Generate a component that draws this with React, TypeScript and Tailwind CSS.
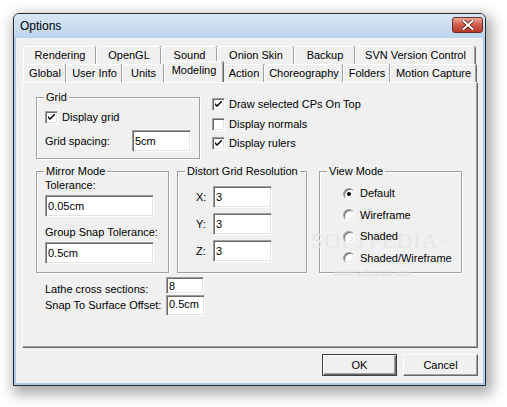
import React from "react";

const FONT = { fontFamily: '"Liberation Sans", Arial, sans-serif' };

function Sunken({ className, value }: { className: string; value: string }) {
  return (
    <div
      className={
        "relative z-10 flex items-center bg-white pl-[2px] border border-t-[#a0a0a0] border-l-[#a0a0a0] border-r-white border-b-white shadow-[inset_1px_1px_0_#696969,inset_-1px_-1px_0_#e3e3e3] text-black " +
        className
      }
    >
      {value}
    </div>
  );
}

function Check({ checked, label }: { checked: boolean; label: string }) {
  return (
    <div className="flex items-center h-[13px]">
      <div className="w-[13px] h-[13px] bg-white border border-t-[#a0a0a0] border-l-[#a0a0a0] border-r-white border-b-white shadow-[inset_1px_1px_0_#696969,inset_-1px_-1px_0_#e3e3e3] flex items-center justify-center">
        {checked && (
          <svg width="7" height="7" viewBox="0 0 7 7">
            <path d="M0 2 L0 4 L2 6 L7 1 L7 -1 L2 4 Z" fill="#000" />
          </svg>
        )}
      </div>
      <span className="ml-[4px] leading-[13px]">{label}</span>
    </div>
  );
}

function Radio({ checked, label }: { checked: boolean; label: string }) {
  return (
    <div className="relative z-10 flex items-center h-[13px]">
      <div className="w-[12px] h-[12px] rounded-full bg-white border border-t-[#a0a0a0] border-l-[#a0a0a0] border-r-white border-b-white shadow-[inset_1px_1px_0_#696969,inset_-1px_-1px_0_#e3e3e3] flex items-center justify-center">
        {checked && <div className="w-[4px] h-[4px] rounded-full bg-black" />}
      </div>
      <span className="ml-[5px] leading-[13px]">{label}</span>
    </div>
  );
}

function Group({
  label,
  className,
  children,
}: {
  label: string;
  className: string;
  children: React.ReactNode;
}) {
  return (
    <div
      className={
        "relative border border-[#a0a0a0] shadow-[inset_1px_1px_0_#fff,1px_1px_0_#fff] " +
        className
      }
    >
      <span className="absolute -top-[7px] left-[7px] bg-[#f0f0f0] px-[2px] leading-[13px]">
        {label}
      </span>
      {children}
    </div>
  );
}

function Tab({
  label,
  w,
  selected,
}: {
  label: string;
  w: string;
  selected?: boolean;
}) {
  return (
    <div
      className={
        "flex items-center justify-center bg-[#f0f0f0] border-t border-l border-white rounded-t-[2px] shadow-[inset_-1px_0_0_#a0a0a0,1px_0_0_#696969] " +
        w +
        (selected ? " h-[21px] -mt-[3px] relative z-10 pb-[3px]" : " h-[18px]")
      }
    >
      {label}
    </div>
  );
}

function Btn({ label, def }: { label: string; def?: boolean }) {
  return (
    <div
      className={
        "w-[75px] h-[22px] flex items-center justify-center bg-[#f0f0f0] " +
        (def
          ? "border border-[#404040] shadow-[inset_1px_1px_0_#fff,inset_-1px_-1px_0_#696969,inset_-2px_-2px_0_#a0a0a0]"
          : "border border-t-white border-l-white border-r-[#696969] border-b-[#696969] shadow-[inset_-1px_-1px_0_#a0a0a0]")
      }
    >
      {label}
    </div>
  );
}

export default function App() {
  return (
    <div className="w-[507px] h-[407px] bg-white overflow-hidden text-[11px] text-black" style={FONT}>
      <div className="ml-[13px] mt-[13px] w-[473px] h-[373px] border border-[#2a2a2a] rounded-t-[6px] bg-[#a9cbed] shadow-[3px_5px_14px_3px_rgba(0,0,0,0.35)] flex flex-col">
        {/* title bar */}
        <div className="h-[24px] rounded-t-[5px] bg-gradient-to-b from-[#d9e7f6] to-[#bcd4ee] flex items-start shrink-0">
          <span className="ml-[6px] mt-[5px] text-[12px] leading-[14px] text-black">Options</span>
          <div className="ml-auto mr-[2px] mt-[3px] w-[31px] h-[16px] rounded-[3px] border border-[#6b2a22] bg-gradient-to-b from-[#e9a99c] via-[#cf5a48] to-[#b83a2a] flex items-center justify-center">
            <svg width="12" height="10" viewBox="0 0 12 10">
              <path
                d="M1.5 1 L10.5 9 M10.5 1 L1.5 9"
                stroke="#5a1a12"
                strokeWidth="3.6"
                strokeLinecap="square"
              />
              <path
                d="M1.5 1 L10.5 9 M10.5 1 L1.5 9"
                stroke="#ffffff"
                strokeWidth="2"
                strokeLinecap="square"
              />
            </svg>
          </div>
        </div>
        {/* client */}
        <div className="mx-[2px] w-[467px] h-[345px] bg-[#f0f0f0] pl-[6px] pt-[8px]">
          {/* tabs */}
          <div className="pl-[1px] flex">
            <Tab label="Rendering" w="w-[73px]" />
            <Tab label="OpenGL" w="w-[65px]" />
            <Tab label="Sound" w="w-[56px]" />
            <Tab label="Onion Skin" w="w-[77px]" />
            <Tab label="Backup" w="w-[61px]" />
            <Tab label="SVN Version Control" w="w-[120px]" />
          </div>
          <div className="pl-[1px] flex">
            <Tab label="Global" w="w-[43px]" />
            <Tab label="User Info" w="w-[56px]" />
            <Tab label="Units" w="w-[42px]" />
            <Tab label="Modeling" w="w-[59px]" selected />
            <Tab label="Action" w="w-[41px]" />
            <Tab label="Choreography" w="w-[79px]" />
            <Tab label="Folders" w="w-[47px]" />
            <Tab label="Motion Capture" w="w-[86px]" />
          </div>
          {/* panel */}
          <div className="relative w-[456px] h-[266px] border border-t-white border-l-white border-r-[#696969] border-b-[#696969] shadow-[inset_-1px_-1px_0_#a0a0a0] pt-[14px] pl-[13px]">
            <div className="flex">
              <Group label="Grid" className="w-[164px] h-[62px] pt-[13px] pl-[8px]">
                <Check checked label="Display grid" />
                <div className="flex items-center mt-[6px]">
                  <span className="w-[87px] leading-[13px]">Grid spacing:</span>
                  <Sunken className="w-[59px] h-[22px]" value="5cm" />
                </div>
              </Group>
              <div className="ml-[12px] mt-[1px] flex flex-col gap-[6.5px]">
                <Check checked label="Draw selected CPs On Top" />
                <Check checked={false} label="Display normals" />
                <Check checked label="Display rulers" />
              </div>
            </div>
            <div className="flex mt-[12px]">
              <Group label="Mirror Mode" className="w-[133px] h-[102px] pt-[7px] pl-[8px]">
                <div className="leading-[13px]">Tolerance:</div>
                <Sunken className="mt-[3px] w-[109px] h-[22px]" value="0.05cm" />
                <div className="mt-[9px] leading-[13px]">Group Snap Tolerance:</div>
                <Sunken className="mt-[3px] w-[109px] h-[22px]" value="0.5cm" />
              </Group>
              <Group label="Distort Grid Resolution" className="ml-[8px] w-[130px] h-[102px] pt-[14px] pl-[18px] flex flex-col gap-[5px]">
                <div className="flex items-center">
                  <span className="w-[17px] leading-[13px]">X:</span>
                  <Sunken className="w-[59px] h-[22px]" value="3" />
                </div>
                <div className="flex items-center">
                  <span className="w-[17px] leading-[13px]">Y:</span>
                  <Sunken className="w-[59px] h-[22px]" value="3" />
                </div>
                <div className="flex items-center">
                  <span className="w-[17px] leading-[13px]">Z:</span>
                  <Sunken className="w-[59px] h-[22px]" value="3" />
                </div>
              </Group>
              <Group label="View Mode" className="ml-[12px] w-[143px] h-[102px] pt-[15px] pl-[23px] flex flex-col gap-[8.5px]">
                <Radio checked label="Default" />
                <Radio checked={false} label="Wireframe" />
                <Radio checked={false} label="Shaded" />
                <Radio checked={false} label="Shaded/Wireframe" />
              </Group>
            </div>
            <div className="flex items-end mt-[4px] pl-[9px]">
              <span className="w-[121px] leading-[13px] -mb-[2px]">Lathe cross sections:</span>
              <Sunken className="w-[38px] h-[17px] items-start" value="8" />
            </div>
            <div className="flex items-center mt-[1px] pl-[9px]">
              <span className="w-[121px] leading-[13px]">Snap To Surface Offset:</span>
              <Sunken className="w-[39px] h-[21px] items-start" value="0.5cm" />
            </div>
            {/* watermark */}
            <div
              className="absolute left-[288px] top-[147px] text-[22px] leading-[22px] tracking-[1px] text-[#e6e6e6] pointer-events-none select-none"
              style={{ fontFamily: '"Liberation Serif", serif' }}
            >
              SOFTPEDIA<sup className="text-[8px]">™</sup>
            </div>
            <div className="absolute left-[311px] top-[186px] text-[9px] leading-[9px] text-[#e0e0e0] pointer-events-none select-none">
              www.softpedia.com
            </div>
          </div>
          <div className="flex justify-end gap-[6px] mt-[6px] pr-[5px]">
            <Btn label="OK" def />
            <Btn label="Cancel" />
          </div>
        </div>
      </div>
    </div>
  );
}
